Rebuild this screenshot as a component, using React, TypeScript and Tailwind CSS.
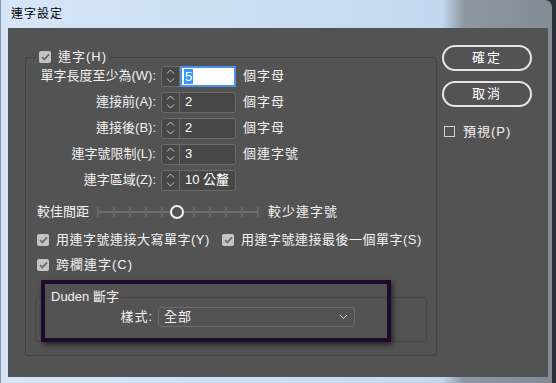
import React from "react";

const Check = ({ on = true }: { on?: boolean }) =>
  on ? (
    <span className="w-[12px] h-[12px] rounded-[2px] bg-[#c4c4c4] flex items-center justify-center shrink-0">
      <svg width="9" height="8" viewBox="0 0 9 8">
        <path d="M1 4.2 L3.4 6.4 L8 1.4" stroke="#6c6c6c" strokeWidth="1.8" fill="none" />
      </svg>
    </span>
  ) : (
    <span className="w-[11px] h-[11px] border border-[#d0d0d0] shrink-0" />
  );

const Arrows = () => (
  <span className="w-[18px] h-full border-r border-[#6b6b6b] flex items-center justify-center shrink-0">
    <svg width="9" height="16" viewBox="0 0 9 16">
      <path d="M1 5.5 L4.5 2 L8 5.5" stroke="#c9c9c9" strokeWidth="1" fill="none" />
      <path d="M1 10.5 L4.5 14 L8 10.5" stroke="#c9c9c9" strokeWidth="1" fill="none" />
    </svg>
  </span>
);

interface RowProps {
  label: string;
  value: string;
  unit?: string;
  focus?: boolean;
}

const SpinRow = ({ label, value, unit, focus }: RowProps) => (
  <div className="flex items-center h-[20px]">
    <div className="w-[130px] text-right whitespace-nowrap">{label}</div>
    <div className="ml-[5px] w-[75px] h-[21px] flex items-stretch border border-[#6b6b6b] rounded-[3px] bg-[#474747]">
      <Arrows />
      {focus ? (
        <span className="flex-1 -my-px -mr-px bg-white border-2 border-[#4a93e6] flex items-center pl-[2px]">
          <span className="bg-[#3399ff] text-white px-[1px] leading-[15px]">{value}</span>
        </span>
      ) : (
        <span className="flex-1 flex items-center pl-[5px] text-white">{value}</span>
      )}
    </div>
    {unit && <span className="ml-[7px] tracking-[1px]">{unit}</span>}
  </div>
);

const Slider = () => {
  const ticks = [0, 1, 2, 3, 4, 6, 7, 8, 9, 10];
  return (
    <div className="relative w-[162px] h-[14px]">
      <div className="absolute left-0 right-0 top-[6px] h-[2px] bg-[#6e6e6e]" />
      {ticks.map((i) => (
        <div key={i} className="absolute top-[2px] w-[2px] h-[10px] bg-[#666]" style={{ left: i * 16 }} />
      ))}
      <div className="absolute left-[73px] top-0 w-[14px] h-[14px] rounded-full border-2 border-[#f2f2f2] bg-[#535353]" />
    </div>
  );
};

export default function App() {
  return (
    <div className="w-[556px] h-[383px] bg-[#2a3037] overflow-hidden text-[13px] text-[#f2f2f2] [font-family:'Liberation_Sans','Noto_Sans_CJK_TC',sans-serif]">
      <div className="w-[552px] h-[383px] rounded-tr-[7px] border-l border-[#8a96a3] bg-[linear-gradient(to_right,#d6e6f7_0%,#c3d8f0_80%,#8f98a1_84%,#838b94_100%)] pl-[7px] flex flex-col">
        <div className="h-[28px] flex items-center pl-[3px] text-[12px] text-black tracking-[1px]">連字設定</div>
        <div className="relative w-[540px] h-[349px] bg-[#535353] border border-[#4b535c] flex pt-[16px] pl-[16px]">
          <fieldset className="mt-[4px] w-[412px] h-[307px] border border-[#424242] rounded-[3px]">
            <legend className="ml-[10px] px-[3px] h-[16px] flex items-center gap-[7px]">
              <Check />
              <span className="tracking-[1px]">連字(H)</span>
            </legend>
            <div className="pt-[1px] flex flex-col gap-[6px]">
              <SpinRow label="單字長度至少為(W):" value="5" unit="個字母" focus />
              <SpinRow label="連接前(A):" value="2" unit="個字母" />
              <SpinRow label="連接後(B):" value="2" unit="個字母" />
              <SpinRow label="連字號限制(L):" value="3" unit="個連字號" />
              <SpinRow label="連字區域(Z):" value="10 公釐" />
            </div>
            <div className="mt-[12px] h-[20px] flex items-center pl-[11px]">
              <span className="w-[60px]">較佳間距</span>
              <Slider />
              <span className="ml-[9px] tracking-[1px]">較少連字號</span>
            </div>
            <div className="mt-[8px] h-[20px] flex items-center pl-[11px]">
              <Check />
              <span className="ml-[7px] w-[166px] tracking-[0.5px] whitespace-nowrap">用連字號連接大寫單字(Y)</span>
              <Check />
              <span className="ml-[7px] tracking-[0.5px] whitespace-nowrap">用連字號連接最後一個單字(S)</span>
            </div>
            <div className="mt-[5px] h-[20px] flex items-center pl-[11px]">
              <Check />
              <span className="ml-[7px] tracking-[1px]">跨欄連字(C)</span>
            </div>
            <fieldset className="mt-[14px] ml-[9px] w-[392px] h-[53px] border border-[#474747] rounded-[3px]">
              <legend className="ml-[13px] px-[2px] h-[16px] flex items-center">Duden 斷字</legend>
              <div className="pt-[2px] flex items-center h-[22px]">
                <span className="w-[117px] text-right tracking-[1px]">樣式:</span>
                <div className="ml-[5px] w-[197px] h-[20px] border border-[#6d6d6d] rounded-[3px] flex items-center justify-between pl-[5px] pr-[6px]">
                  <span className="tracking-[1px]">全部</span>
                  <svg width="9" height="6" viewBox="0 0 9 6">
                    <path d="M1 1 L4.5 4.5 L8 1" stroke="#d0d0d0" strokeWidth="1" fill="none" />
                  </svg>
                </div>
              </div>
            </fieldset>
          </fieldset>
          <div className="ml-[5px] flex flex-col">
            <button className="w-[90px] h-[26px] rounded-full border-2 border-[#e6e6e6] text-white tracking-[2px]">確定</button>
            <button className="mt-[10px] w-[90px] h-[26px] rounded-full border-2 border-[#e6e6e6] text-white tracking-[2px]">取消</button>
            <div className="mt-[15px] ml-[2px] flex items-center gap-[8px]">
              <Check on={false} />
              <span className="tracking-[1px]">預視(P)</span>
            </div>
          </div>
          <div className="absolute left-[32px] top-[251px] w-[350px] h-[62px] border-4 border-[#1e0a2c] shadow-[2px_3px_5px_rgba(0,0,0,0.55)]" />
        </div>
      </div>
    </div>
  );
}
